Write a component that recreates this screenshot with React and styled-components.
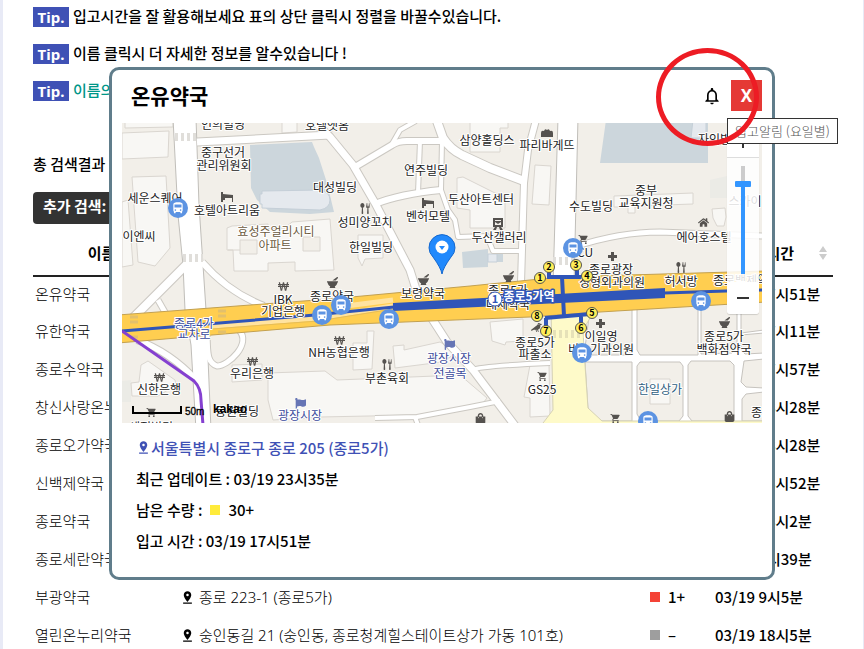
import React, { useState } from "react";
import styled, { createGlobalStyle } from "styled-components";
import { MdNotificationsNone, MdPinDrop, MdShoppingCart, MdDirectionsBus } from "react-icons/md";
import { FaWonSign, FaMortarPestle, FaFlag, FaShoppingBag, FaHome, FaCrow } from "react-icons/fa";
import { ImSpoonKnife } from "react-icons/im";

const GlobalStyle = createGlobalStyle`
  * { box-sizing: border-box; }
  html { scrollbar-width: none; }
  body {
    margin: 0;
    background: #e8eaf6;
    color: #000;
    font-family: "Noto Sans CJK KR", "Noto Sans", sans-serif;
    font-size: 15px;
  }
  button, input { font: inherit; margin: 0; }
`;

const Page = styled.div`
  position: relative;
  height: 100vh;
  overflow: hidden;
`;

const Panel = styled.main`
  margin: 0 1px 0 3px;
  padding: 7px 30px 0;
  min-height: 100vh;
  background: #fff;
`;

const Tips = styled.ul`
  list-style: none;
  margin: 0 0 51px;
  padding: 0;
  display: flex;
  flex-direction: column;
  gap: 17px;
`;

const Tip = styled.li`
  display: flex;
  align-items: center;
  gap: 4px;
  height: 20px;
  line-height: 18px;
  font-weight: 500;
  white-space: nowrap;
  color: ${(p) => (p.$accent ? "#009688" : "#000")};
`;

const TipText = styled.span`
  height: 20px;
`;

const Badge = styled.span`
  width: 36px;
  line-height: 20px;
  background: #3f51b5;
  color: #fff;
  font-family: "Noto Sans", "Open Sans", sans-serif;
  font-weight: 700;
  text-align: center;
`;

const Total = styled.p`
  margin: 0 0 16px;
  line-height: 24px;
  font-weight: 500;
`;

const FilterBar = styled.div`
  height: 32px;
  padding: 0 10px;
  border-radius: 4px;
  width: 50%;
  background: #333;
  color: #fff;
  font-weight: 700;
  line-height: 28px;
`;

const Table = styled.table`
  width: 100%;
  margin-top: 8px;
  border-collapse: collapse;
  table-layout: fixed;
`;

const HeadCell = styled.th`
  height: 44px;
  padding: 0 2px 2px;
  border-bottom: 2px solid #222;
  font-weight: 700;
  width: ${(p) => p.$width || "auto"};
`;

const HeadInner = styled.div`
  display: flex;
  align-items: center;
  padding-right: ${(p) => p.$end || "3px"};
`;

const HeadText = styled.span`
  flex: 1;
`;

const Row = styled.tr`
  height: 38px;
`;

const Cell = styled.td`
  padding: 0 2px 4px;
  font-family: ${(p) => (p.$strong ? "inherit" : '"Noto Sans", "Noto Sans CJK KR", sans-serif')};
  font-weight: ${(p) => (p.$strong ? 500 : 300)};
  line-height: 22px;
  white-space: nowrap;
`;

const Inline = styled.span`
  display: flex;
  align-items: center;
  gap: ${(p) => p.$gap || "4px"};
`;

const Stock = styled.span`
  width: 10px;
  height: 10px;
  background: ${(p) => p.$color};
`;

const Overlay = styled.div`
  position: absolute;
  inset: 0;
  display: flex;
  align-items: flex-start;
  padding: 67px 89px 0 109px;
`;

const Modal = styled.section`
  flex: 1;
  min-width: 0;
  padding: 10px 10px 21px;
  background: #fff;
  border: 3px solid #607d8b;
  border-radius: 10px;
`;

const ModalHeader = styled.header`
  display: flex;
  align-items: center;
  height: 31px;
  margin-bottom: 12px;
  padding-left: 9px;
`;

const Title = styled.h2`
  flex: 1;
  margin: 0;
  font-size: 21px;
  line-height: 31px;
  font-weight: 700;
`;

const BellArea = styled.div`
  position: relative;
  z-index: 2;
  margin-right: 7px;
`;

const BellButton = styled.button`
  display: flex;
  align-items: center;
  justify-content: center;
  width: 24px;
  height: 22px;
  padding: 0;
  border: 0;
  background: none;
  color: #000;
`;

const Tooltip = styled.span`
  position: absolute;
  left: 27px;
  top: 33px;
  width: 111px;
  height: 26px;
  border: 1px solid #333;
  background: #fff;
  color: #555;
  font-size: 13px;
  font-weight: 300;
  line-height: 24px;
  text-align: center;
  white-space: nowrap;
`;

const Highlight = styled.span`
  position: absolute;
  left: -44px;
  top: -37px;
  width: 103px;
  height: 98px;
  border: 5px solid #ed1c24;
  border-radius: 50%;
  pointer-events: none;
`;

const CloseButton = styled.button`
  width: 31px;
  height: 31px;
  padding: 0;
  border: 0;
  background: #e53935;
  color: #fff;
  font-family: "Noto Sans", sans-serif;
  font-size: 17px;
  font-weight: 700;
  line-height: 26px;
`;

const MapBox = styled.div`
  position: relative;
  height: 300px;
  overflow: hidden;
`;

const MapCanvas = styled.svg`
  display: block;
  width: 100%;
  height: 100%;
  font-family: "Noto Sans CJK KR", sans-serif;
`;

const ZoomControl = styled.div`
  position: absolute;
  top: 3px;
  right: 3px;
  width: 32px;
  display: flex;
  flex-direction: column;
  border-radius: 3px;
  box-shadow: 0 1px 1px rgba(0, 0, 0, 0.15);
`;

const ZoomButton = styled.button`
  display: flex;
  align-items: center;
  justify-content: center;
  height: 32px;
  padding: 0;
  border: 0;
  border-bottom: 1px solid #ddd;
  background: #fff;
  &:last-child { border-bottom: 0; border-radius: 0 0 3px 3px; }
`;

const ZoomTrack = styled.label`
  display: flex;
  justify-content: center;
  padding: 8px 0;
  background: rgba(255, 255, 255, 0.85);
`;

const ZoomRange = styled.input`
  appearance: none;
  writing-mode: vertical-lr;
  direction: rtl;
  width: 16px;
  height: 108px;
  background: linear-gradient(#ccc 0 18px, #3396ff 18px) center / 4px 100% no-repeat;
  &::-webkit-slider-thumb {
    appearance: none;
    width: 16px;
    height: 6px;
    border-radius: 1px;
    background: #3396ff;
  }
`;

const Details = styled.div`
  padding: 9px 14px 0;
`;

const DetailLine = styled.p`
  display: flex;
  align-items: center;
  gap: 8px;
  margin: 0;
  height: 31px;
  font-weight: 500;
`;

const AddressLink = styled.a`
  display: flex;
  align-items: center;
  color: #3f51b5;
  text-decoration: none;
`;

const SortIcon = () => (
  <svg width="10" height="16" viewBox="0 0 10 16" fill="#ccc" aria-hidden="true">
    <path d="M5 1 9 7H1zM5 15 1 9h8z" />
  </svg>
);

const rows = [
  { name: "온유약국", time: "03/19 17시51분" },
  { name: "유한약국", time: "03/19 17시11분" },
  { name: "종로수약국", time: "03/19 17시57분" },
  { name: "창신사랑온누리약국", time: "03/19 18시28분" },
  { name: "종로오가약국", time: "03/19 18시28분" },
  { name: "신백제약국", time: "03/19 18시52분" },
  { name: "종로약국", time: "03/19 18시2분" },
  { name: "종로세란약국", time: "03/19 9시39분" },
  { name: "부광약국", address: "종로 223-1 (종로5가)", color: "#f44336", stock: "1+", time: "03/19 9시5분" },
  { name: "열린온누리약국", address: "숭인동길 21 (숭인동, 종로청계힐스테이트상가 가동 101호)", color: "#9e9e9e", stock: "–", time: "03/19 18시5분" },
];

/* Map data: [path, width] for roads, point lists for blocks and buildings. */
const roads = [
  ["M197 142 330 135", 7],
  ["M316 123 330 137 353 165 375 203 410 270 420 302", 7],
  ["M429 314 447 342 473 370 516 427", 7],
  ["M355 167 392 145Q398 141 407 141H443", 6],
  ["M392 144 400 130 416 121", 4],
  ["M437 121 443 138Q450 149 462 155L490 168 524 181", 8],
  ["M420 141 418 193", 4],
  ["M442 141 441 190 448 210 455 220 458 237 487 236 493 251 521 251", 4],
  ["M375 204Q400 194 441 190", 6],
  ["M536 120 528 150 524 183 521 283", 6],
  ["M574 247Q620 232 660 232L762 236", 5],
  ["M187 264 132 319", 8],
  ["M202 262Q228 292 264 306", 6],
  ["M158 300 166 314", 5],
  ["M137 340Q170 352 196 380", 6],
  ["M239 330C252 344 228 366 217 366 206 362 208 350 207 336", 5],
  ["M375 418 417 417 470 407 500 401", 4],
  ["M415 417 418 425", 4],
  ["M472 370Q480 366 550 363", 4],
];

const buildings = [
  "125,120 173,120 173,127 125,128",
  "122,133 169,131 168,157 122,159",
  "132,177 166,176 170,248 155,266 138,262",
  "122,202 128,200 133,265 122,267",
  "282,120 297,120 297,132 282,133",
  "232,226 268,224 268,229 285,228 292,222 330,219 334,270 295,271 295,262 268,263 268,271 234,271 233,250 227,250 227,228",
  "358,235 383,235 383,258 365,259 362,266 358,258",
  "457,178 463,177 505,198 505,228 470,228 470,210 457,208",
  "470,120 508,120 508,128 500,128 500,152 470,152",
  "535,165 551,166 549,205 532,204",
  "614,196 693,193 693,204 635,206 635,213 628,213 628,207 614,207",
  "712,209 725,208 726,217 724,226 717,226 713,218",
  "141,365 148,361 175,380 176,385 158,396 132,396 131,383 139,382",
  "268,373 325,371 337,380 460,375 487,398 483,403 417,415 320,417 273,420 268,400",
  "353,343 367,343 367,331 374,331 372,369 353,370",
  "393,346 404,345 404,350 440,342 458,352 442,362 395,368",
  "490,322 523,319 523,341 506,342 505,345 492,341",
  "232,365 262,364 262,380 232,382",
  "530,365 549,364 550,416 530,417 530,398 524,397",
  "319,125 326,120 334,129 329,135 323,135",
];

const blocks = [
  "590,309 632,304 632,352 629,355 592,355 585,348",
  "637,304 698,302 698,355 640,355 637,350",
  "701,303 737,301 737,347 732,353 701,354",
  "741,300 764,299 764,330 741,333",
  "741,335 764,333 764,353 745,354 741,349",
  "585,362 632,362 632,421 600,421 588,410",
  "640,362 680,362 683,366 683,416 679,421 641,421 637,414 637,366",
  "691,361 730,361 734,365 734,421 692,421 688,416 688,365",
  "744,361 764,359 764,388 746,387 741,382",
  "746,394 764,392 764,421 742,421 742,399",
];

const labels = [
  ["인의빌딩", 223, 124], ["호텔앳홈", 327, 125], ["중구선거", 223, 152], ["관리위원회", 224, 165],
  ["세운스퀘어", 155, 198], ["호텔아트리움", 227, 210], ["이엔씨", 139, 236],
  ["효성주얼리시티", 276, 231, "#6b5a40"], ["아파트", 275, 245, "#6b5a40"],
  ["대성빌딩", 335, 187], ["성미양꼬치", 365, 222], ["한일빌딩", 371, 247], ["연주빌딩", 426, 170],
  ["벤허모텔", 428, 216], ["두산아트센터", 481, 199], ["두산갤러리", 499, 237], ["삼양홀딩스", 487, 140],
  ["파리바게뜨", 547, 145], ["중부", 646, 190], ["교육지원청", 646, 203], ["수도빌딩", 591, 206],
  ["에어호스텔", 704, 237], ["자인빌딩", 720, 139], ["스카이", 745, 201], ["CU", 585, 252],
  ["종로광장", 611, 269], ["성형외과의원", 612, 282], ["허서방", 681, 281], ["종로백제약국", 746, 280],
  ["IBK", 283, 299], ["기업은행", 283, 311], ["종로약국", 332, 296], ["보령약국", 423, 293],
  ["종로5가", 508, 290], ["대제약국", 508, 304],
  ["종로4가", 194, 323, "#3c4c9c"], ["교차로", 194, 334, "#3c4c9c"],
  ["우리은행", 252, 373], ["신한은행", 159, 389], ["NH농협은행", 339, 352], ["부촌육회", 387, 378],
  ["광장시장", 449, 358, "#3c4c9c"], ["전골목", 450, 373, "#3c4c9c"], ["광장시장", 300, 415, "#3c4c9c"],
  ["동원빌딩", 237, 411], ["종로5가", 535, 342], ["파출소", 535, 354], ["GS25", 542, 389],
  ["이일영", 601, 336], ["비뇨기과의원", 601, 349], ["종로5가", 724, 336], ["백화점약국", 724, 349],
  ["한일상가", 660, 389, "#2f607f"], ["종로", 762, 412], ["세정빌딩", 151, 427],
];

const places = [
  [FaWonSign, 283, 286], [FaWonSign, 252, 361], [FaWonSign, 159, 377], [FaWonSign, 339, 340],
  [FaMortarPestle, 332, 282], [FaMortarPestle, 423, 279], [FaMortarPestle, 508, 276], [FaMortarPestle, 724, 322],
  [ImSpoonKnife, 365, 208], [ImSpoonKnife, 387, 364], [ImSpoonKnife, 681, 267],
  [FaFlag, 300, 403, "#6675b5"], [FaFlag, 449, 344, "#6675b5"],
  [MdShoppingCart, 151, 412], [MdShoppingCart, 583, 239], [MdShoppingCart, 542, 376], [MdShoppingCart, 615, 418],
  [FaHome, 703, 222], [FaShoppingBag, 480, 418], [FaShoppingBag, 729, 416], [FaCrow, 536, 327],
];

const buses = [[178, 208], [322, 315], [341, 305], [389, 319], [573, 248], [701, 301], [582, 353], [648, 421]];
const exits = [[540, 278], [549, 267], [576, 265], [587, 276], [592, 313], [581, 328], [546, 331], [537, 316]];
const crossings = ["M175 137H197", "M183 258H203", "M553 261H574", "M553 334H584"];

const StreetMap = () => (
  <MapCanvas viewBox="122 123 640 300" preserveAspectRatio="xMidYMid slice" role="img" aria-label="온유약국 지도">
    <path fill="#f2efe9" d="M0 0H900V600H0z" />
    <path fill="#ebebe6" d="M710 180 727 176V198H710zM122 381 131 380V402H122z" />
    <path fill="#ccd6dc" d="M250 145 312 142 314 147 319 158 327 183 334 212 310 214 270 212 257 200 251 188zM606 120H708V163H600zM462 252 488 249V267L463 268zM497 253H503V262H497z" />
    <path fill="#e5e9ee" stroke="#c5cfd8" d="M262 191 320 190Q330 192 330 200T320 210L262 208V204H260V194H262zM693 120H706V140H700V138H691zM488 254H497V262H488z" />
    {buildings.map((p) => (
      <polygon key={p} points={p} fill="#f8f7f4" stroke="#dad6d0" />
    ))}
    <path fill="#f2efe9" stroke="#dad6d0" d="M240 240H257V254H240zM303 237H320V251H303zM228 250H240" />
    <path fill="#fff" d="M583 304 762 298V423H583z" />
    {blocks.map((p) => (
      <polygon key={p} points={p} fill="#f2efe9" stroke="#c6c3be" />
    ))}
    <path fill="#f8f7f4" stroke="#dad6d0" d="M650 379H670V404H650z" />
    <g fill="none" stroke="#cbc8c2" strokeLinejoin="round">
      {roads.map(([d, w]) => <path key={d} d={d} strokeWidth={w + 2} />)}
    </g>
    <path fill="#fff" stroke="#c0beb9" d="M173 118 178 215 183 265 185 310 191 345 196 430H211L206 310 203 265 199 205 196 118zM558 118 553 285H574L578 118z" />
    <g fill="none" stroke="#fff" strokeLinejoin="round">
      {roads.map(([d, w]) => <path key={d} d={d} strokeWidth={w} />)}
    </g>
    <g stroke="#e0deda" strokeWidth="8" strokeDasharray="3 3">
      {crossings.slice(0, 3).map((d) => <path key={d} d={d} />)}
    </g>
    <path fill="#fefac9" stroke="#d6d2b4" d="M551 305 593 303 590 318 583 330 585 365 588 408 602 421H764V427H540L553 410 552 360z" />
    <path d={crossings[3]} stroke="#e6e1b8" strokeWidth="8" strokeDasharray="3 3" />
    <path fill="#ffce50" stroke="#c2a050" d="M118 315 330 299 470 286 560 277 766 271V302L600 312 530 317 330 325 118 343z" />
    <path stroke="#ffe3a0" strokeWidth="5" fill="none" d="M212 326 318 318 393 306M346 306 393 300" />
    <path stroke="#e6bd58" fill="none" d="M212 329 318 321 393 309" />
    <path stroke="#e3c06b" strokeWidth="3" d="M130 317H138M130 322H138M130 337H138M218 311H226M218 316H226M218 332H226" />
    <path stroke="#2f55b8" strokeWidth="3" fill="none" d="M122 331 315 315 394 307M664 293 726 291 762 290" />
    <path fill="#2f55b8" d="M393 303 665 288V298L393 311z" />
    <path stroke="#2f55b8" strokeWidth="4" fill="none" d="M562 277 564 316M549 268V277H577V265M577 277H584M545 318 590 314M546 318V328M581 315V326" />
    <path stroke="#8540d0" strokeWidth="3" fill="none" d="M122 331 194 381Q201 388 201 400L203 425" />

    {places.map(([Icon, x, y, color]) => (
      <Icon key={`${x}-${y}`} x={x - 5} y={y - 5} size={11} color={color || "#55524f"} />
    ))}
    <g fill="#55524f">
      <path d="M221 192H223V194L233 195V202H232V198H225V200H223V202H221zM422 198H424V200L434 201V208H433V204H426V206H424V208H422z" />
      <path d="M611 252H614V255H617V258H614V261H611V258H608V255H611zM599 319H602V322H605V325H602V328H599V325H596V322H599z" />
      <path d="M541 137V133Q541 130 544 131 545 128 547 130 549 128 550 131 553 130 553 133V137z" />
      <path d="M493 218H503V227H493zM493 230 495 227H497L496 230zM499 227H501L503 230H500z" />
      <path fill="#f2efe9" d="M495 220H501V221H495zM495 222 498 224 501 222V225H495z" />
    </g>

    <g fontSize="12" fontWeight="400" textAnchor="middle" stroke="#fff" strokeWidth="2" strokeLinejoin="round" paintOrder="stroke">
      {labels.map(([text, x, y, color]) => (
        <text key={`${text}-${x}-${y}`} x={x} y={y + 5} fill={color || "#222"}>{text}</text>
      ))}
      <text x="529" y="301" fill="#fff" stroke="#2f55b8" strokeWidth="3" fontWeight="700">종로5가역</text>
    </g>
    <circle cx="495" cy="299" r="7" fill="#fff" stroke="#2f55b8" />
    <text x="495" y="303" fontSize="11" fontWeight="700" textAnchor="middle" fill="#2f55b8">1</text>

    {exits.map(([x, y], i) => (
      <g key={x}>
        <circle cx={x} cy={y} r="5.5" fill="#ffee58" stroke="#555" />
        <text x={x} y={y + 3} fontSize="9" fontWeight="700" textAnchor="middle">{i + 1}</text>
      </g>
    ))}
    {buses.map(([x, y]) => (
      <g key={x}>
        <circle cx={x} cy={y} r="10" fill="#5c93e2" />
        <MdDirectionsBus x={x - 7} y={y - 7} size={14} color="#fff" />
      </g>
    ))}
    <path fill="#2189fc" stroke="#1468cf" d="M442 274Q441 268 433 257A13 13 0 1 1 451 257Q443 268 442 274z" />
    <circle cx="442" cy="247" r="6.5" fill="#fff" />
    <path fill="#2189fc" d="M439 246H445L442 250z" />

    <path stroke="#000" strokeWidth="2" fill="none" d="M133 406V413H181V406" />
    <text x="185" y="415" fontSize="10" fontFamily="Liberation Sans" stroke="#000" strokeWidth=".3">50m</text>
    <text x="213" y="413" fontSize="12" fontWeight="700" fontFamily="Liberation Sans">kakao</text>
  </MapCanvas>
);

export default function App() {
  const [zoom, setZoom] = useState(85);
  return (
    <Page>
      <GlobalStyle />
      <Panel>
        <Tips>
          <Tip><Badge>Tip.</Badge><TipText>입고시간을 잘 활용해보세요 표의 상단 클릭시 정렬을 바꿀수있습니다.</TipText></Tip>
          <Tip><Badge>Tip.</Badge><TipText>이름 클릭시 더 자세한 정보를 알수있습니다 !</TipText></Tip>
          <Tip $accent><Badge>Tip.</Badge><TipText>이름의</TipText></Tip>
        </Tips>
        <Total>총 검색결과</Total>
        <FilterBar>추가 검색:</FilterBar>
        <Table>
          <thead>
            <tr>
              <HeadCell $width="145px"><HeadInner $end="8px"><HeadText>이름</HeadText></HeadInner></HeadCell>
              <HeadCell />
              <HeadCell $width="65px" />
              <HeadCell $width="120px"><HeadInner><HeadText>입고시간</HeadText><SortIcon /></HeadInner></HeadCell>
            </tr>
          </thead>
          <tbody>
            {rows.map((r) => (
              <Row key={r.name}>
                <Cell>{r.name}</Cell>
                <Cell>{r.address && <Inline><MdPinDrop size={15} />{r.address}</Inline>}</Cell>
                <Cell $strong>{r.stock && <Inline $gap="8px"><Stock $color={r.color} />{r.stock}</Inline>}</Cell>
                <Cell $strong>{r.time}</Cell>
              </Row>
            ))}
          </tbody>
        </Table>
      </Panel>
      <Overlay>
        <Modal role="dialog" aria-labelledby="pharmacy-name">
          <ModalHeader>
            <Title id="pharmacy-name">온유약국</Title>
            <BellArea>
              <BellButton type="button" aria-label="입고알림"><MdNotificationsNone size={20} /></BellButton>
              <Tooltip role="tooltip">입고알림 (요일별)</Tooltip>
              <Highlight />
            </BellArea>
            <CloseButton type="button">X</CloseButton>
          </ModalHeader>
          <MapBox>
            <StreetMap />
            <ZoomControl>
              <ZoomButton type="button" aria-label="확대">
                <svg width="12" height="12"><path d="M6 0V12M0 6H12" stroke="#333" strokeWidth="2" /></svg>
              </ZoomButton>
              <ZoomTrack>
                <ZoomRange type="range" aria-label="지도 확대 수준" value={zoom} onChange={(e) => setZoom(Number(e.target.value))} />
              </ZoomTrack>
              <ZoomButton type="button" aria-label="축소">
                <svg width="12" height="2"><path d="M0 1H12" stroke="#333" strokeWidth="2" /></svg>
              </ZoomButton>
            </ZoomControl>
          </MapBox>
          <Details>
            <DetailLine><AddressLink href="#map"><MdPinDrop size={15} />서울특별시 종로구 종로 205 (종로5가)</AddressLink></DetailLine>
            <DetailLine>최근 업데이트 : 03/19 23시35분</DetailLine>
            <DetailLine>남은 수량 : <Stock $color="#ffeb3b" /> 30+</DetailLine>
            <DetailLine>입고 시간 : 03/19 17시51분</DetailLine>
          </Details>
        </Modal>
      </Overlay>
    </Page>
  );
}
